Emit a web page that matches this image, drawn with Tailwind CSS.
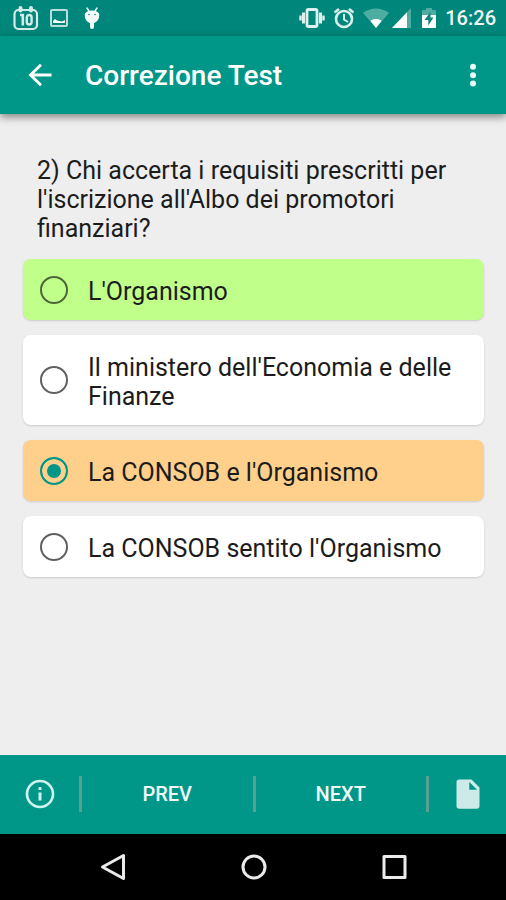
<!DOCTYPE html>
<html lang="it">
<head>
<meta charset="utf-8">
<meta name="viewport" content="width=device-width, initial-scale=1">
<title>Correzione Test</title>
<script src="https://cdn.jsdelivr.net/npm/@tailwindcss/browser@4"></script>
</head>
<body class="flex min-h-screen flex-col bg-[#eeeeee] font-['Roboto',sans-serif] text-[#1c1c1c]">

  <!-- Status bar -->
  <div class="flex h-9 shrink-0 items-center justify-between bg-[#00867a] pr-[10px] pl-3 text-white">
    <div class="flex items-center gap-[10px]">
      <svg class="h-7 w-7" viewBox="0 0 28 28" fill="none" stroke="#d5ebe9" aria-hidden="true">
        <rect x="2.500" y="6" width="22.500" height="19" rx="4" stroke-width="2.200"/>
        <path d="M8.500 4v2.500M19 4v2.500" stroke-width="4" stroke-linecap="round"/>
        <path d="M8 11h2.800v10.500" stroke-width="2.600"/>
        <rect x="14.800" y="11" width="4.800" height="9.500" rx="2.400" stroke-width="2.400"/>
      </svg>
      <svg class="h-[18px] w-[18px]" viewBox="0 0 18 18" aria-hidden="true">
        <rect x="1" y="1" width="16" height="16" rx="1" fill="none" stroke="#b9dedb" stroke-width="2"/>
        <path d="M3 14v-2l2-2 2 1.500 2 .5 3 .5 3-1.500V14z" fill="#fff"/>
      </svg>
      <svg class="ml-1 h-6 w-5" viewBox="0 0 20 24" aria-hidden="true">
        <path d="M5 2l2 3M15 2l-2 3" stroke="#e4f3f1" stroke-width="1.500" stroke-linecap="round"/>
        <path d="M3 7.500C5 3.500 15 3.500 17 7.500c1 4-1.500 9-5 9.500v4a2 2 0 0 1-4 0v-4C4.500 16.500 2 11.500 3 7.500z" fill="#f2faf9"/>
        <circle cx="7" cy="8.500" r=".8" fill="#00867a"/><circle cx="13" cy="8.500" r=".8" fill="#00867a"/>
      </svg>
    </div>
    <div class="flex items-center gap-2">
      <svg class="h-6 w-[26px]" viewBox="0 0 26 24" fill="none" stroke="#dff1ef" aria-hidden="true">
        <rect x="8" y="3.500" width="10" height="17" rx="1.500" stroke-width="2.800"/>
        <path d="M4.500 6.500v11M21.500 6.500v11" stroke-width="3"/>
        <path d="M1.500 9.500v5M24.500 9.500v5" stroke-width="2.400"/>
      </svg>
      <svg class="h-6 w-[22px]" viewBox="0 0 22 24" fill="none" stroke="#d9efec" aria-hidden="true">
        <circle cx="11" cy="13" r="8" stroke-width="2.600"/>
        <path d="M1.500 6.500L6 3M20.500 6.500L16 3" stroke-width="2.600"/>
        <path d="M11 8v5.500l4 2.500" stroke-width="2"/>
      </svg>
      <svg class="h-6 w-[50px]" viewBox="0 0 50 24" aria-hidden="true">
        <path d="M0 7C7 1 19 1 26 7L13 22z" fill="#4dada3"/>
        <path d="M7.500 15c3-2.600 8-2.600 11 0L13 22z" fill="#fff"/>
        <path d="M48 2v20H29z" fill="#4dada3"/>
        <path d="M44 6.200V22H29z" fill="#fff"/>
      </svg>
      <svg class="h-6 w-4" viewBox="0 0 16 24" aria-hidden="true">
        <path d="M5 2h6v2h3a1 1 0 0 1 1 1v6H1V5a1 1 0 0 1 1-1h3z" fill="#4dada3"/>
        <path d="M1 9h14v12a1 1 0 0 1-1 1H2a1 1 0 0 1-1-1z" fill="#fff"/>
        <path d="M9.500 6L3.500 14h3.800v5.500l5.200-8H9.500z" fill="#00867a"/>
      </svg>
      <span class="text-xl leading-6 font-medium text-[#eff8f7]">16:26</span>
    </div>
  </div>

  <!-- App bar -->
  <header class="z-10 flex h-[78px] shrink-0 items-center bg-[#009688] pr-4 pl-6 text-white shadow-[0_3px_8px_rgba(0,0,0,0.45)]">
    <button type="button" aria-label="Indietro" class="flex h-12 w-8 items-center justify-center">
      <svg class="h-8 w-8" viewBox="0 0 32 32" fill="none" stroke="currentColor" stroke-width="2.800" aria-hidden="true">
        <path d="M27.500 16H7M17 5.800L6.500 16 17 26.200"/>
      </svg>
    </button>
    <h1 class="ml-[29px] flex-1 pt-[2px] text-[28px] leading-8 font-medium">Correzione Test</h1>
    <button type="button" aria-label="Altre opzioni" class="flex h-12 w-[34px] items-center justify-center">
      <svg class="h-7 w-2" viewBox="0 0 8 28" fill="#e9faf8" aria-hidden="true">
        <circle cx="4" cy="5.800" r="3"/><circle cx="4" cy="14.200" r="3"/><circle cx="4" cy="22.600" r="3"/>
      </svg>
    </button>
  </header>

  <!-- Question -->
  <main class="flex-1 pr-[22px] pb-8 pl-[23px]">
    <fieldset>
      <legend class="px-[14px] pt-[42px] pb-4 text-[25px] leading-[29px]">2) Chi accerta i requisiti prescritti per l'iscrizione all'Albo dei promotori finanziari?</legend>
      <div class="flex flex-col gap-[15px] text-[25px] leading-[29px]">
        <label class="flex items-center gap-5 rounded-lg bg-[#c1ff8b] py-[14px] pr-4 pl-[17px] shadow-[0_1px_2px_rgba(0,0,0,0.15)]">
          <input type="radio" name="risposta" class="h-7 w-7 shrink-0 appearance-none rounded-full border-2 border-[#4d6638] checked:border-[#009688]">
          <span class="pt-1">L'Organismo</span>
        </label>
        <label class="flex items-center gap-5 rounded-lg bg-white py-[14px] pr-4 pl-[17px] shadow-[0_1px_2px_rgba(0,0,0,0.15)]">
          <input type="radio" name="risposta" class="h-7 w-7 shrink-0 appearance-none rounded-full border-2 border-[#606060] checked:border-[#009688]">
          <span class="pt-1">Il ministero dell'Economia e delle Finanze</span>
        </label>
        <label class="flex items-center gap-5 rounded-lg bg-[#ffd08b] py-[14px] pr-4 pl-[17px] shadow-[0_1px_2px_rgba(0,0,0,0.15)]">
          <input type="radio" name="risposta" checked class="h-7 w-7 shrink-0 appearance-none rounded-full border-2 border-[#606060] checked:border-[#009688] checked:bg-[#009688] checked:shadow-[inset_0_0_0_5px_#ffd08b]">
          <span class="pt-1">La CONSOB e l'Organismo</span>
        </label>
        <label class="flex items-center gap-5 rounded-lg bg-white py-[14px] pr-4 pl-[17px] shadow-[0_1px_2px_rgba(0,0,0,0.15)]">
          <input type="radio" name="risposta" class="h-7 w-7 shrink-0 appearance-none rounded-full border-2 border-[#606060] checked:border-[#009688]">
          <span class="pt-1">La CONSOB sentito l'Organismo</span>
        </label>
      </div>
    </fieldset>
  </main>

  <!-- Bottom toolbar -->
  <footer class="flex h-[79px] shrink-0 items-center bg-[#009688] pb-[2px] text-xl font-medium text-[#eefaf8]">
    <button type="button" aria-label="Informazioni" class="flex h-full w-[79px] items-center justify-center">
      <svg class="h-8 w-8" viewBox="0 0 32 32" fill="none" stroke="#d0f3ef" aria-hidden="true">
        <circle cx="16" cy="16" r="13" stroke-width="2.600"/>
        <path d="M16 14.500v8M16 9v3" stroke-width="3"/>
      </svg>
    </button>
    <span class="h-9 w-[3px] bg-[#5a9f92]"></span>
    <button type="button" class="h-full flex-1">PREV</button>
    <span class="h-9 w-[3px] bg-[#5a9f92]"></span>
    <button type="button" class="h-full flex-1">NEXT</button>
    <span class="h-9 w-[3px] bg-[#5a9f92]"></span>
    <button type="button" aria-label="Documento" class="flex h-full w-[77px] items-center justify-center">
      <svg class="h-8 w-6" viewBox="0 0 24 32" aria-hidden="true">
        <path d="M3.300 1.500h12.200L23.500 9.500V28a2.800 2.800 0 0 1-2.800 2.800H3.300A2.800 2.800 0 0 1 .5 28V4.300A2.800 2.800 0 0 1 3.300 1.500zM13.300 4v7.700H21z" fill="#ccebe8" fill-rule="evenodd"/>
      </svg>
    </button>
  </footer>

  <!-- System navigation -->
  <nav aria-label="Sistema" class="flex h-[66px] shrink-0 items-center justify-center bg-black pl-[2px] text-[#ebebeb]">
    <button type="button" aria-label="Indietro" class="flex h-12 w-[140px] items-center justify-center">
      <svg class="h-8 w-8" viewBox="0 0 32 32" fill="none" stroke="currentColor" stroke-width="3" stroke-linejoin="round" aria-hidden="true"><path d="M25.500 4.500v23L4.500 16z"/></svg>
    </button>
    <button type="button" aria-label="Home" class="flex h-12 w-[140px] items-center justify-center">
      <svg class="h-8 w-8" viewBox="0 0 32 32" fill="none" stroke="currentColor" stroke-width="3" aria-hidden="true"><circle cx="16" cy="16" r="11"/></svg>
    </button>
    <button type="button" aria-label="Recenti" class="flex h-12 w-[140px] items-center justify-center">
      <svg class="h-8 w-8" viewBox="0 0 32 32" fill="none" stroke="currentColor" stroke-width="3" stroke-linejoin="round" aria-hidden="true"><rect x="6" y="5.500" width="21" height="21"/></svg>
    </button>
  </nav>
</body>
</html>
